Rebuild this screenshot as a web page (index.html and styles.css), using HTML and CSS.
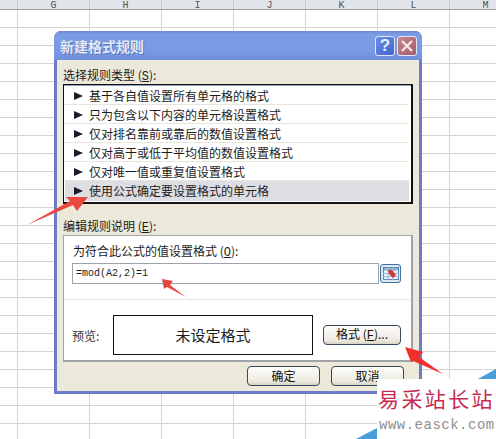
FILE: index.html
```html
<!DOCTYPE html>
<html lang="zh-CN">
<head>
<meta charset="utf-8">
<title>新建格式规则</title>
<link rel="stylesheet" href="styles.css">
</head>
<body>
<div class="stage">
  <div class="sheet">
    <div class="cols">
      <span class="col col-first">G</span><span class="col">H</span><span class="col">I</span><span class="col">J</span><span class="col">K</span><span class="col">L</span><span class="col">M</span>
    </div>
    <div class="cells"></div>
  </div>

  <section class="dialog">
    <header class="titlebar">
      <h1 class="title">新建格式规则</h1>
      <span class="winbtn help">?</span>
      <span class="winbtn close">
        <svg width="14" height="14" viewBox="0 0 14 14"><path d="M2 2 12 12M12 2 2 12" stroke="#f4e6e6" stroke-width="2.4" fill="none"/></svg>
      </span>
    </header>
    <div class="body">
      <div class="label label-first">选择规则类型 (<u>S</u>):</div>
      <ul class="rules">
        <li class="rule"><i class="tri"></i>基于各自值设置所有单元格的格式</li>
        <li class="rule"><i class="tri"></i>只为包含以下内容的单元格设置格式</li>
        <li class="rule"><i class="tri"></i>仅对排名靠前或靠后的数值设置格式</li>
        <li class="rule"><i class="tri"></i>仅对高于或低于平均值的数值设置格式</li>
        <li class="rule"><i class="tri"></i>仅对唯一值或重复值设置格式</li>
        <li class="rule selected"><i class="tri"></i>使用公式确定要设置格式的单元格</li>
      </ul>
      <div class="label label-second">编辑规则说明 (<u>E</u>):</div>
      <div class="group">
        <div class="formula-label">为符合此公式的值设置格式 (<u>O</u>):</div>
        <div class="formula">
          <span class="formula-text">=mod(A2,2)=1</span>
          <span class="picker">
            <svg width="16" height="13" viewBox="0 0 16 13"><rect x=".5" y=".5" width="15" height="12" fill="#e8f0fa" stroke="#5a86b4"/><rect x="1" y="1" width="14" height="2.5" fill="#8fb0d4"/><path d="M0 6.5H16M0 9.5H16M5 0V13M10 0V13" stroke="#9dbad6"/><path d="M5 3 9 3 13 8 10 11 6 7Z" fill="#cf3a34"/></svg>
          </span>
        </div>
        <div class="rule-line"></div>
        <div class="preview-row">
          <span class="preview-label">预览:</span>
          <div class="preview">未设定格式</div>
          <button class="btn format-btn">格式 (<u>F</u>)...</button>
        </div>
      </div>
      <div class="actions">
        <button class="btn action">确定</button>
        <button class="btn action">取消</button>
      </div>
    </div>
  </section>

  <svg class="arrows" width="496" height="439" viewBox="0 0 496 439">
    <path d="M88 197 77 211 73 205 27 225 70 201 66 197Z" fill="#e8483e"/>
    <path d="M162 279 173 281 170 285 186 297 167 287 164 289Z" fill="#e8483e"/>
    <path d="M405 347 423 352 419 357 443 374 413 361 411 362Z" fill="#f0302c"/>
  </svg>

  <div class="mark-tri mark-top"></div>
  <div class="mark-tri mark-bottom"></div>
  <div class="watermark">
    <div class="mark-cn">易采站长站</div>
    <div class="mark-en">www.easck.com</div>
  </div>
</div>
</body>
</html>
```
FILE: styles.css
```css
* { box-sizing: border-box; }
html, body { margin: 0; padding: 0; }
body { background: #fff; font-family: "Noto Sans CJK SC", "Liberation Sans", sans-serif; font-size: 12px; color: #1c1c1c; }
.stage { position: relative; width: 496px; height: 439px; overflow: hidden; }

.sheet { display: flex; flex-direction: column; width: 496px; height: 439px; }
.cols { display: flex; height: 10px; padding-left: 17px; background: #e1e4e9; border-bottom: 1px solid #9a9da1; flex: none; }
.col { flex: none; width: 72px; height: 9px; border-right: 1px solid #c8cacd; font: 10px/12px "Liberation Mono", monospace; text-align: center; color: #555; }
.col-first { width: 73px; border-left: 1px solid #c8cacd; }
.cells { flex: 1; background-color: #fff;
  background-image: linear-gradient(#d4d4d4 1px, transparent 1px), linear-gradient(90deg, #d4d4d4 1px, transparent 1px);
  background-size: 72px 18px;
  background-position: 17px 17px; }

.dialog { position: absolute; left: 54px; top: 31px; width: 368px; height: 363px; display: flex; flex-direction: column;
  border-radius: 7px 7px 0 0; background: #6d7cc6; padding: 0 3px 3px; }
.titlebar { flex: none; height: 29px; display: flex; align-items: center; margin: 0 -3px; padding: 0 5px 0 6px; border-radius: 7px 7px 0 0;
  background: linear-gradient(#6a8ad8 0, #7c9ce4 12%, #7a99e2 70%, #6f8fdc 100%); }
.title { margin: 0; flex: 1; font-size: 14px; font-weight: 700; line-height: 18px; color: #e2e9f6; text-shadow: 1px 1px 0 #5a74bc; }
.winbtn { flex: none; width: 20px; height: 20px; border: 1px solid #dfe6f6; border-radius: 3px; display: flex; align-items: center; justify-content: center; margin-left: 2px; }
.help { background: linear-gradient(135deg, #6b8fe6, #3f66cc); color: #e8eefb; font: 700 17px/1 "Liberation Sans", sans-serif; }
.close { background: linear-gradient(135deg, #c28a92, #a85a6a); }

.body { flex: 1; background: #ece8da; padding: 0 6px; display: flex; flex-direction: column; min-height: 0; }
.label { height: 14px; line-height: 14px; white-space: nowrap; }
.label u { font-family: "Liberation Mono", monospace; }
.label-first { margin-top: 8px; }
.rules { list-style: none; margin: 2px 0 0; padding: 1px 2px 0 1px; height: 120px; width: 350px; background: #fff; border: 1px solid #111; border-right-width: 2px; border-bottom-width: 2px; box-shadow: inset 0 1px 0 #8aa0b8; }
.rule { display: flex; align-items: center; height: 19px; padding-top: 1px; line-height: 18px; border-bottom: 1px solid #e8e5da; white-space: nowrap; }
.rule.selected { height: 20px; padding: 0 0 1px; background: #dddde4; border-bottom: 0; }
.tri { flex: none; width: 0; height: 0; margin: 0 6px 0 9px; border-left: 9px solid #1a1a2a; border-top: 4px solid transparent; border-bottom: 4px solid transparent; }
.label-second { margin-top: 15px; }
.group { flex: none; margin-top: 2px; width: 350px; height: 127px; background: #fff; border: 1px solid #a0a4a8; border-right-width: 2px; border-bottom-width: 2px; padding: 8px 8px 0 8px; display: flex; flex-direction: column; }
.formula-label { height: 14px; line-height: 14px; padding-left: 1px; white-space: nowrap; }
.formula-label u { font-family: "Liberation Mono", monospace; }
.formula { flex: none; margin-top: 5px; width: 307px; height: 21px; border: 1px solid #9aa4ac; display: flex; align-items: center; position: relative; }
.formula-text { font: 10px/1 "Liberation Mono", monospace; padding-left: 3px; }
.picker { position: absolute; right: -23px; top: 0; width: 21px; height: 19px; border: 1px solid #3f6f9c; border-radius: 3px; background: #dfe7f0; display: flex; align-items: center; justify-content: center; }
.rule-line { flex: none; margin: 15px -8px 0; height: 1px; background: #e6e6e6; }
.preview-row { display: flex; align-items: center; margin-top: 15px; }
.preview-label { width: 41px; color: #333; }
.preview { width: 200px; height: 40px; border: 1px solid #111; font-size: 15px; line-height: 38px; text-align: center; }
.btn { font: 12px/1 "Noto Sans CJK SC", sans-serif; color: #111; padding: 0; border: 1px solid #36485e; border-radius: 4px; background: linear-gradient(#fdfdfb, #ece9df 80%, #d6d2c4); white-space: nowrap; }
.format-btn { width: 78px; height: 20px; margin-left: 10px; }
.format-btn u { font-family: "Liberation Mono", monospace; }
.actions { display: flex; justify-content: flex-end; gap: 11px; margin-top: 4px; padding-right: 9px; }
.action { width: 73px; height: 20px; }

.arrows { position: absolute; left: 0; top: 0; pointer-events: none; }
.mark-tri { position: absolute; width: 0; height: 0; }
.mark-top { left: 476px; top: 369px; border-left: 20px solid transparent; border-bottom: 11px solid #4a9fd8; }
.mark-bottom { left: 356px; top: 428px; border-left: 21px solid transparent; border-bottom: 11px solid #4a9fd8; }
.watermark { position: absolute; left: 377px; top: 379px; width: 119px; height: 60px; background: #fff; padding-left: 1px; }
.mark-cn { font-size: 21px; line-height: 26px; padding-top: 6px; height: 32px; letter-spacing: 2.4px; color: #c62a52; white-space: nowrap; }
.mark-en { font-family: "Liberation Mono", monospace; font-size: 14px; line-height: 14px; margin-top: 7px; padding-left: 1px; height: 14px; color: #8f8f8f; letter-spacing: .5px; white-space: nowrap; }
```
